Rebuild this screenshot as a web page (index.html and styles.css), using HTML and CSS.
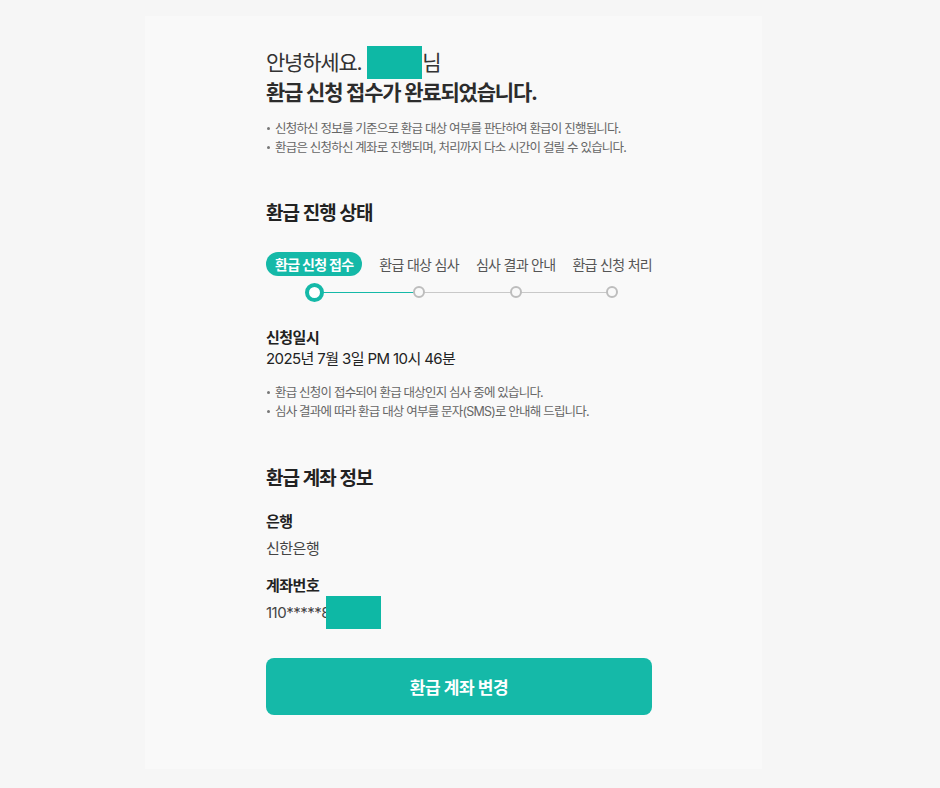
FILE: index.html
```html
<!DOCTYPE html>
<html lang="ko">
<head>
<meta charset="utf-8">
<title>환급 신청 접수</title>
<link rel="stylesheet" href="styles.css">
</head>
<body>
<main class="panel">
  <h1 class="title">
    <span class="greet">안녕하세요. <span class="mask mask-name"></span>님</span>
    <span class="done">환급 신청 접수가 완료되었습니다.</span>
  </h1>
  <ul class="notes">
    <li>신청하신 정보를 기준으로 환급 대상 여부를 판단하여 환급이 진행됩니다.</li>
    <li>환급은 신청하신 계좌로 진행되며, 처리까지 다소 시간이 걸릴 수 있습니다.</li>
  </ul>

  <h2 class="section-title status-title">환급 진행 상태</h2>
  <div class="stepper">
    <div class="track"><div class="track-fill"></div></div>
    <div class="step active">
      <span class="step-label">환급 신청 접수</span>
      <span class="dot"></span>
    </div>
    <div class="step">
      <span class="step-label">환급 대상 심사</span>
      <span class="dot"></span>
    </div>
    <div class="step">
      <span class="step-label">심사 결과 안내</span>
      <span class="dot"></span>
    </div>
    <div class="step">
      <span class="step-label">환급 신청 처리</span>
      <span class="dot"></span>
    </div>
  </div>

  <div class="field field-date">
    <div class="field-label">신청일시</div>
    <div class="field-value date">2025년 7월 3일 PM 10시 46분</div>
  </div>
  <ul class="notes notes-2">
    <li>환급 신청이 접수되어 환급 대상인지 심사 중에 있습니다.</li>
    <li>심사 결과에 따라 환급 대상 여부를 문자(SMS)로 안내해 드립니다.</li>
  </ul>

  <h2 class="section-title account-title">환급 계좌 정보</h2>
  <div class="field field-bank">
    <div class="field-label">은행</div>
    <div class="field-value">신한은행</div>
  </div>
  <div class="field field-account">
    <div class="field-label">계좌번호</div>
    <div class="field-value">110*****8<span class="mask mask-acc"></span></div>
  </div>

  <button class="primary-btn" type="button">환급 계좌 변경</button>
</main>
</body>
</html>
```

FILE: styles.css
```css
html, body {
  margin: 0;
  padding: 0;
  background: #f6f6f6;
}

body {
  font-family: Inter, "Noto Sans CJK KR", "Noto Sans", sans-serif;
  color: #222;
}

.panel {
  display: block;
  box-sizing: border-box;
  width: 617px;
  height: 753px;
  margin: 16px 0 0 145px;
  padding: 32px 110px 0 121px;
  background: #f9f9f9;
}

.title {
  margin: 0;
  font-size: 21px;
  line-height: 29px;
  letter-spacing: -1.2px;
  color: #2c2c2c;
}

.greet,
.done {
  display: block;
}

.greet {
  font-weight: 400;
  color: #333;
}

.done {
  font-weight: 700;
}

.mask {
  display: inline-block;
  background: #0eb8a5;
  vertical-align: middle;
}

.mask-name {
  width: 55px;
  height: 33px;
  margin: -3px 0 -3px 1px;
  position: relative;
  top: -2px;
}

.mask-acc {
  width: 55px;
  height: 33px;
  margin: -6px 0 -6px -4px;
  position: relative;
  top: -1px;
}

.notes {
  list-style: none;
  margin: 12px 0 0;
  padding: 0;
  font-size: 12.5px;
  line-height: 19px;
  color: #666;
  letter-spacing: -0.8px;
  white-space: nowrap;
}

.notes li {
  position: relative;
  padding-left: 9px;
}

.notes li::before {
  content: "";
  position: absolute;
  left: 1px;
  top: 8px;
  width: 3px;
  height: 3px;
  border-radius: 50%;
  background: #777;
}

.section-title {
  margin: 0;
  font-size: 19px;
  line-height: 26px;
  font-weight: 700;
  color: #222;
  letter-spacing: -0.9px;
}

.status-title {
  margin-top: 44px;
}

.stepper {
  position: relative;
  display: flex;
  justify-content: space-between;
  margin-top: 25px;
}

.track {
  position: absolute;
  left: 48px;
  right: 40px;
  top: 40px;
  height: 1px;
  background: #c9c9c9;
}

.track-fill {
  width: 105px;
  height: 1px;
  background: #15b9a8;
}

.step {
  display: flex;
  flex-direction: column;
  align-items: center;
  position: relative;
  z-index: 1;
}

.step-label {
  display: flex;
  align-items: center;
  height: 24px;
  font-size: 14px;
  color: #555;
  letter-spacing: -0.7px;
  white-space: nowrap;
}

.step.active .step-label {
  padding: 0 9px;
  border-radius: 12px;
  background: #15b9a8;
  color: #fff;
  font-weight: 700;
}

.dot {
  box-sizing: border-box;
  width: 12px;
  height: 12px;
  margin-top: 10px;
  border: 2.5px solid #bdbdbd;
  border-radius: 50%;
  background: #f9f9f9;
}

.step.active .dot {
  width: 19px;
  height: 19px;
  margin-top: 7px;
  border: 4px solid #15b9a8;
  background: #fff;
}

.field-label {
  font-size: 15px;
  line-height: 21px;
  font-weight: 700;
  color: #222;
  letter-spacing: -0.5px;
}

.field-value {
  font-size: 15px;
  line-height: 22px;
  color: #444;
  letter-spacing: -0.5px;
}

.field-value.date {
  font-size: 15px;
  line-height: 21px;
  color: #222;
  letter-spacing: -0.6px;
}

.field-date {
  margin-top: 25px;
}

.notes-2 {
  margin-top: 14px;
}

.account-title {
  margin-top: 45px;
}

.field-bank {
  margin-top: 19px;
}

.field-bank .field-value,
.field-account .field-value {
  margin-top: 6px;
}

.field-account {
  margin-top: 15px;
}

.primary-btn {
  display: block;
  width: 100%;
  height: 57px;
  margin-top: 34px;
  border: none;
  border-radius: 8px;
  background: #15b9a8;
  color: #fff;
  font-family: Inter, "Noto Sans CJK KR", sans-serif;
  font-size: 17px;
  font-weight: 700;
  letter-spacing: -0.4px;
  cursor: pointer;
}
```
